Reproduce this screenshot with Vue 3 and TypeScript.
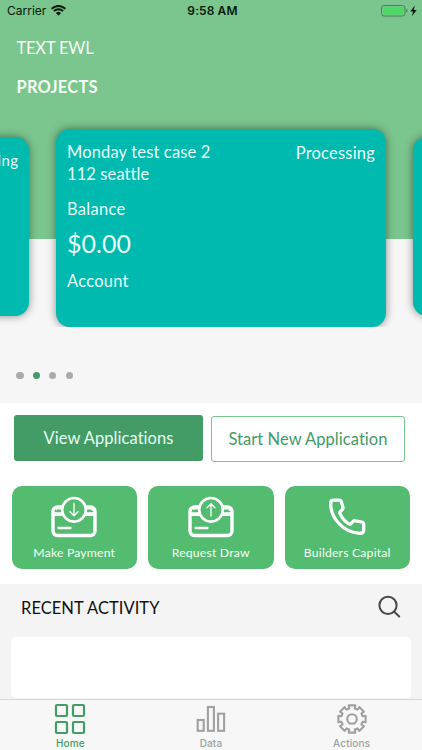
<script setup lang="ts">
interface Tab {
  id: 'home' | 'data' | 'actions'
  label: string
}

interface Tile {
  label: string
  kind: 'down' | 'up' | 'phone'
}

const tabs: Tab[] = [
  { id: 'home', label: 'Home' },
  { id: 'data', label: 'Data' },
  { id: 'actions', label: 'Actions' },
]

const tiles: Tile[] = [
  { label: 'Make Payment', kind: 'down' },
  { label: 'Request Draw', kind: 'up' },
  { label: 'Builders Capital', kind: 'phone' },
]

const pages = 4
const currentPage = 2

// Outline of an eight-toothed cog centred on (16, 16).
function cogPath(): string {
  const points: string[] = []
  const profile: [number, number][] = [
    [-15, 10.9],
    [-13.5, 14],
    [13.5, 14],
    [15, 10.9],
  ]
  for (let tooth = 0; tooth < 8; tooth++) {
    for (const [offset, radius] of profile) {
      const angle = ((tooth * 45 + offset - 90) * Math.PI) / 180
      points.push(`${(16 + radius * Math.cos(angle)).toFixed(2)} ${(16 + radius * Math.sin(angle)).toFixed(2)}`)
    }
  }
  return `M${points.join('L')}Z`
}
const cog = cogPath()
</script>

<template>
  <main class="screen">
    <section class="hero">
      <div class="status">
        <div class="carrier">
          <span>Carrier</span>
          <svg class="wifi" width="15" height="11" viewBox="0 0 15 11">
            <path d="M.6 3.8a9.8 9.8 0 0 1 13.8 0M2.9 6.1a6.6 6.6 0 0 1 9.2 0" fill="none" stroke="#071b0c" stroke-width="2" />
            <path d="M4.9 8.1a3.7 3.7 0 0 1 5.2 0L7.5 10.8z" fill="#071b0c" />
          </svg>
        </div>
        <span class="clock">9:58 AM</span>
        <svg class="battery" width="37" height="14" viewBox="0 0 37 14">
          <rect x=".5" y="1.5" width="23.5" height="10.5" rx="2.5" fill="none" stroke="#4d805a" />
          <rect x="2" y="3" width="20.5" height="7.5" rx="1.2" fill="#4cd964" />
          <path d="M25.2 5v3.6q1.5-.5 1.5-1.8t-1.5-1.8" fill="#4d805a" />
          <path d="M33.8 1.6 29.3 7.4h2.8l-1.2 4.8 4.8-6.1h-2.9z" fill="#071b0c" />
        </svg>
      </div>
      <h1 class="user">TEXT EWL</h1>
      <h2 class="projects">PROJECTS</h2>
      <div class="carousel">
        <article class="card side"><span class="side-state">Processing</span></article>
        <article class="card active">
          <div class="card-head">
            <div class="case">
              <div class="t-case">Monday test case 2</div>
              <div class="t-address">112 seattle</div>
            </div>
            <span class="state">Processing</span>
          </div>
          <div class="t-balance">Balance</div>
          <div class="amount">$0.00</div>
          <div class="t-account">Account</div>
        </article>
        <article class="card side"></article>
      </div>
      <div class="dots">
        <i v-for="page in pages" :key="page" :class="['dot', { on: page === currentPage }]"></i>
      </div>
    </section>

    <section class="controls">
      <div class="buttons">
        <button class="btn solid"><span>View Applications</span></button>
        <button class="btn outline"><span>Start New Application</span></button>
      </div>
      <div class="tiles">
        <button v-for="tile in tiles" :key="tile.kind" :class="['tile', tile.kind]">
          <svg v-if="tile.kind === 'phone'" class="tile-icon" width="46" height="42" viewBox="-1.8 -0.5 46 42">
            <path
              d="M8 3.6h5.4q1.8 0 2.2 1.8l1.5 5.2q.4 1.6-.9 2.9l-1.7 1.6q-.8.8-.3 2.1 3 6.7 8.8 10.2 1.3.7 2.1-.2l1.7-2q1.1-1.3 2.8-.9l6.3 1.2q2 .4 2 2.4v5.5q0 3.4-3.5 3.4C16.5 36.2 4.8 20.5 4.8 7q0-3.4 3.2-3.4z"
              fill="none" stroke="#fff" stroke-width="3.3" stroke-linejoin="round"
            />
          </svg>
          <svg v-else class="tile-icon" width="46" height="42" viewBox="0 0 46 42">
            <rect x="2" y="11" width="42" height="28.5" rx="4.5" fill="none" stroke="#fff" stroke-width="3.4" />
            <path d="M2.5 16.2h41v3.9h-41zM5 12.6h7v2.2H5zM34 12.6h7l2 2.2h-9z" fill="#fff" />
            <path d="M6 14.2h5.500M34.500 14.2H40" stroke="#54bc70" stroke-width="1.5" stroke-linecap="round" />
            <path d="M7.5 32h12" stroke="#fff" stroke-width="2.3" stroke-linecap="round" />
            <circle cx="23" cy="13.8" r="11.8" fill="#54bc70" stroke="#fff" stroke-width="2.6" />
            <path
              :d="tile.kind === 'down' ? 'M23 7.5v12.3m-4-4 4 4 4-4' : 'M23 20V7.7m-4 4 4-4 4 4'"
              fill="none" stroke="#fff" stroke-width="1.3" stroke-linecap="round" stroke-linejoin="round"
            />
          </svg>
          <span class="tile-label">{{ tile.label }}</span>
        </button>
      </div>
    </section>

    <section class="activity">
      <header class="activity-head">
        <h2 class="recent">RECENT ACTIVITY</h2>
        <svg width="24" height="24" viewBox="0 0 24 24" fill="none" stroke="#484848" stroke-width="2">
          <circle cx="11" cy="10.4" r="8.6" />
          <path d="m17.2 16.7 5 4.8" stroke-linecap="round" />
        </svg>
      </header>
      <div class="activity-list"></div>
    </section>

    <nav class="tabs">
      <a v-for="tab in tabs" :key="tab.id" :class="['tab', tab.id]">
        <svg v-if="tab.id === 'home'" width="32" height="32" viewBox="0 0 32 32" fill="none" stroke="#439d64" stroke-width="2.2">
          <rect x="2" y="2" width="11" height="11" rx="1" />
          <rect x="19" y="2" width="11" height="11" rx="1" />
          <rect x="2" y="19" width="11" height="11" rx="1" />
          <rect x="19" y="19" width="11" height="11" rx="1" />
        </svg>
        <svg v-else-if="tab.id === 'data'" width="32" height="32" viewBox="0 0 32 32" fill="none" stroke="#a0a0a0" stroke-width="2.1">
          <rect x="2.7" y="17" width="6" height="10.8" />
          <rect x="12.9" y="4" width="6" height="23.8" />
          <rect x="23.1" y="10.7" width="6" height="17.1" />
        </svg>
        <svg v-else width="32" height="32" viewBox="0 0 32 32" fill="none" stroke="#a0a0a0" stroke-width="2.1" stroke-linejoin="round">
          <path :d="cog" />
          <circle cx="16" cy="16" r="4.8" />
        </svg>
        <span>{{ tab.label }}</span>
      </a>
    </nav>
  </main>
</template>

<style>
body {
  margin: 0;
  background: #f4f4f4;
}
</style>

<style scoped>
* {
  box-sizing: border-box;
}
h1, h2 {
  margin: 0;
  font-weight: 400;
}
button {
  font: inherit;
  border: 0;
  padding: 0;
  margin: 0;
}
.screen {
  width: 422px;
  height: 750px;
  overflow: hidden;
  display: flex;
  flex-direction: column;
  font-family: Lato, sans-serif;
  background: #fff;
}
.hero {
  height: 403px;
  flex: none;
  background: linear-gradient(#7bc58e 239px, #f6f6f6 239px);
  overflow: hidden;
}
.status {
  height: 22px;
  display: grid;
  grid-template-columns: 1fr auto 1fr;
  align-items: center;
  padding: 0 4px 0 7px;
  font: 12px/22px Inter, sans-serif;
  color: #071b0c;
}
.carrier {
  display: flex;
  align-items: center;
  gap: 5px;
}
.carrier span {
  width: 39px;
}
.wifi {
  margin-top: -2px;
}
.clock {
  font-weight: 600;
  letter-spacing: 0.1px;
}
.battery {
  justify-self: end;
  margin-top: -1px;
}
.user, .projects {
  padding-left: 16.5px;
  font-size: 16.5px;
  line-height: 22px;
  color: #f4fff6;
}
.user {
  margin-top: 15px;
  letter-spacing: -0.2px;
}
.projects {
  margin-top: 17px;
  font-weight: 700;
  letter-spacing: 0.2px;
}
.carousel {
  height: 229px;
  padding-top: 31px;
  overflow: hidden;
  display: flex;
  align-items: flex-start;
}
.card {
  flex: none;
  background: #00b9af;
  border-radius: 14px;
  box-shadow: 0 0 9px rgba(0, 0, 0, 0.45);
  color: #e6fffc;
}
.card.side {
  width: 299.5px;
  height: 179px;
  margin-top: 8px;
}
.side:first-child {
  margin-left: -271px;
  margin-right: 27.5px;
  padding: 13px 10px 0;
  text-align: right;
}
.side:last-child {
  margin-left: 27px;
}
.side-state {
  font-size: 15px;
  line-height: 19px;
  letter-spacing: 0.4px;
}
.card.active {
  width: 330px;
  height: 197.5px;
  padding: 12px 11px 0;
  font-size: 16.5px;
  line-height: 22px;
}
.card-head {
  display: flex;
  justify-content: space-between;
}
.t-case {
  letter-spacing: 0.15px;
}
.t-address {
  letter-spacing: 0.1px;
}
.state {
  margin-top: 1px;
  letter-spacing: 0.2px;
}
.t-balance {
  margin-top: 13px;
  letter-spacing: 0.3px;
}
.amount {
  font-size: 25px;
  line-height: 34px;
  margin-top: 6px;
}
.t-account {
  margin-top: 10px;
  letter-spacing: 0.25px;
}
.dots {
  display: flex;
  gap: 9.1px;
  margin: 45px 0 0 16.4px;
}
.dot {
  width: 7.3px;
  height: 7.3px;
  border-radius: 50%;
  background: #aaa;
}
.dot.on {
  background: #439d64;
}
.controls {
  height: 181px;
  flex: none;
  background: #fff;
  padding: 12px 11px 0;
}
.buttons {
  display: flex;
  gap: 8px;
  padding-left: 3px;
}
.btn {
  height: 46px;
  border-radius: 3px;
  font-size: 16.5px;
  line-height: 22px;
  padding-bottom: 1px;
}
.solid {
  width: 189px;
  background: #439b65;
  color: #e4fff0;
  letter-spacing: 0.05px;
}
.outline {
  width: 194px;
  margin-top: 1px;
  background: #fff;
  border: 1px solid #7bc58e;
  color: #439b65;
  letter-spacing: 0.05px;
}
.tiles {
  display: flex;
  gap: 11px;
  margin-top: 24px;
  padding-left: 0.5px;
}
.tile {
  width: 125.5px;
  height: 83px;
  border-radius: 10px;
  background: #54bc70;
  color: #f2fff5;
  display: flex;
  flex-direction: column;
  align-items: center;
  padding-top: 10px;
}
.tile-label {
  margin-top: 6px;
  font-size: 12.2px;
  line-height: 17px;
  letter-spacing: 0.2px;
}
.activity {
  height: 115px;
  flex: none;
  background: #f4f4f4;
  padding: 0 11px;
}
.activity-head {
  height: 52.5px;
  display: flex;
  align-items: center;
  justify-content: space-between;
  padding: 0 10px;
}
.recent {
  padding-bottom: 5px;
  font-size: 16.5px;
  line-height: 22px;
  color: #111;
  letter-spacing: 0.05px;
}
.activity-head svg {
  margin-top: -6px;
}
.activity-list {
  height: 61px;
  background: #fff;
  border-radius: 5px;
}
.tabs {
  height: 51px;
  flex: none;
  background: #f7f7f7;
  border-top: 1px solid #d7d7d7;
  display: grid;
  grid-template-columns: repeat(3, 1fr);
}
.tab {
  display: flex;
  flex-direction: column;
  align-items: center;
  padding-top: 3px;
  color: #a0a0a0;
  font: 500 10px/14px Inter, sans-serif;
  letter-spacing: 0.15px;
}
.tab span {
  margin-top: 1px;
}
.tab.home {
  color: #439d64;
}
</style>
